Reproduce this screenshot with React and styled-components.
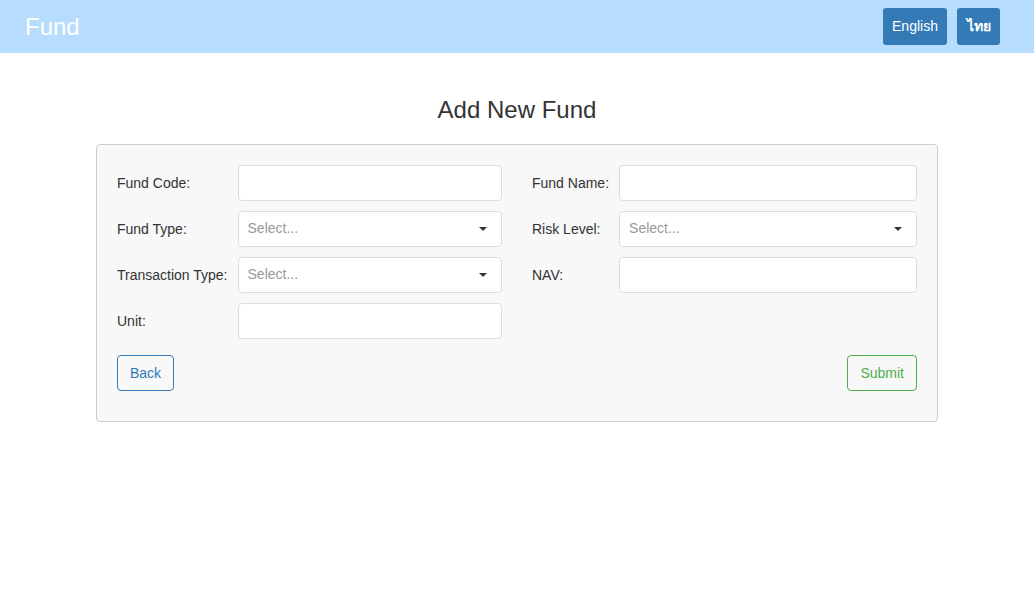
import React from "react";
import styled, { createGlobalStyle } from "styled-components";

const Global = createGlobalStyle`
  html, body { margin: 0; padding: 0; background: #fff; }
  body { font-family: "Liberation Sans", Arial, Helvetica, sans-serif; font-size: 14px; color: #333; }
  * { box-sizing: border-box; }
`;

const Header = styled.header`
  height: 53px;
  background: #b8dcfe;
  display: flex;
  align-items: center;
  justify-content: space-between;
  padding: 0 34px 0 25px;
`;

const Brand = styled.div`
  color: #fff;
  font-size: 24px;
  line-height: 1;
  margin-top: 1px;
`;

const LangGroup = styled.div`
  display: flex;
  gap: 10px;
  margin-bottom: 1px;
`;

const LangButton = styled.button`
  height: 37px;
  padding: 0 8px;
  background: #337ab7;
  color: #fff;
  border: none;
  border-radius: 3px;
  font-family: "Liberation Sans", Arial, sans-serif;
  font-size: 14px;
  font-weight: ${(p) => (p.$bold ? 700 : 400)};
  min-width: ${(p) => p.$w}px;
  cursor: pointer;
`;

const Main = styled.main`
  padding: 0 96px;
`;

const Title = styled.h1`
  margin: 0;
  padding-top: 43px;
  height: 91px;
  text-align: center;
  font-weight: 400;
  font-size: 24px;
  line-height: 27px;
  color: #333;
`;

const Panel = styled.div`
  background: #f8f8f8;
  border: 1px solid #ccc;
  border-radius: 4px;
  padding: 20px 20px 30px;
`;

const Columns = styled.div`
  display: grid;
  grid-template-columns: 1fr 1fr;
  column-gap: 30px;
`;

const FieldGrid = styled.div`
  display: grid;
  grid-template-columns: max-content 1fr;
  column-gap: 10px;
  row-gap: 10px;
  align-items: center;
  align-content: start;
`;

const Label = styled.label`
  font-size: 14px;
  color: #333;
  line-height: 20px;
`;

const Input = styled.input`
  height: 36px;
  width: 100%;
  border: 1px solid #ddd;
  border-radius: 4px;
  background: #fff;
  padding: 0 10px;
  font-family: inherit;
  font-size: 14px;
  outline: none;
`;

const SelectBox = styled.div`
  height: 36px;
  border: 1px solid #ddd;
  border-radius: 4px;
  background: #fff;
  display: flex;
  align-items: center;
  justify-content: space-between;
  padding: 0 14px 2px 9px;
  color: #999;
  font-size: 14px;
`;

const Caret = styled.span`
  width: 0;
  height: 0;
  border-left: 4px solid transparent;
  border-right: 4px solid transparent;
  border-top: 4px solid #333;
  margin-top: 2px;
`;

const Actions = styled.div`
  display: flex;
  justify-content: space-between;
  margin-top: 16px;
`;

const OutlineButton = styled.button`
  height: 36px;
  padding: 0 12px;
  background: transparent;
  border: 1px solid ${(p) => p.$color};
  color: ${(p) => p.$color};
  border-radius: 4px;
  font-family: inherit;
  font-size: 14px;
  cursor: pointer;
`;

const Select = () => (
  <SelectBox>
    <span>Select...</span>
    <Caret />
  </SelectBox>
);

export default function App() {
  return (
    <>
      <Global />
      <Header>
        <Brand>Fund</Brand>
        <LangGroup>
          <LangButton $w={64}>English</LangButton>
          <LangButton $w={43} $bold>ไทย</LangButton>
        </LangGroup>
      </Header>
      <Main>
        <Title>Add New Fund</Title>
        <Panel>
          <Columns>
            <FieldGrid>
              <Label>Fund Code:</Label>
              <Input />
              <Label>Fund Type:</Label>
              <Select />
              <Label>Transaction Type:</Label>
              <Select />
              <Label>Unit:</Label>
              <Input />
            </FieldGrid>
            <FieldGrid>
              <Label>Fund Name:</Label>
              <Input />
              <Label>Risk Level:</Label>
              <Select />
              <Label>NAV:</Label>
              <Input />
            </FieldGrid>
          </Columns>
          <Actions>
            <OutlineButton $color="#337ab7">Back</OutlineButton>
            <OutlineButton $color="#4cae4c">Submit</OutlineButton>
          </Actions>
        </Panel>
      </Main>
    </>
  );
}
